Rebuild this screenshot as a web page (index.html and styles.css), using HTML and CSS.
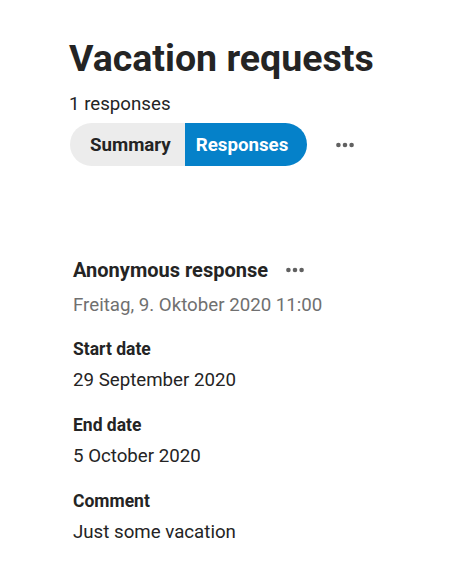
FILE: index.html
```html
<!DOCTYPE html>
<html lang="en">
<head>
<meta charset="utf-8">
<title>Vacation requests</title>
<link rel="stylesheet" href="styles.css">
</head>
<body>
<main class="page">
  <header class="head">
    <h1 class="title">Vacation requests</h1>
    <div class="count">1 responses</div>
    <div class="tabs-row">
      <div class="tabs">
        <button class="tab">Summary</button>
        <button class="tab active">Responses</button>
      </div>
      <button class="more" aria-label="More options">
        <svg width="18" height="6" viewBox="0 0 18 6"><circle cx="2.4" cy="3" r="2.3"/><circle cx="9" cy="3" r="2.3"/><circle cx="15.6" cy="3" r="2.3"/></svg>
      </button>
    </div>
  </header>
  <section class="response">
    <div class="resp-head">
      <h2 class="resp-title">Anonymous response</h2>
      <button class="more small" aria-label="More options">
        <svg width="18" height="6" viewBox="0 0 18 6"><circle cx="2.4" cy="3" r="2.3"/><circle cx="9" cy="3" r="2.3"/><circle cx="15.6" cy="3" r="2.3"/></svg>
      </button>
    </div>
    <div class="resp-date">Freitag, 9. Oktober 2020 11:00</div>
    <div class="field first">
      <div class="label">Start date</div>
      <div class="value">29 September 2020</div>
    </div>
    <div class="field">
      <div class="label">End date</div>
      <div class="value">5 October 2020</div>
    </div>
    <div class="field">
      <div class="label">Comment</div>
      <div class="value">Just some vacation</div>
    </div>
  </section>
</main>
</body>
</html>
```

FILE: styles.css
```css
* { box-sizing: border-box; }
html, body { margin: 0; padding: 0; background: #ffffff; }
body {
  font-family: Roboto, "Liberation Sans", Arial, sans-serif;
  color: #242424;
}
.page { padding: 36px 0 0 69px; }
.title {
  margin: 0;
  font-size: 37.5px;
  line-height: 44px;
  font-weight: 700;
  color: #242424;
}
.count {
  margin-top: 12px;
  font-size: 18.7px;
  line-height: 24px;
  color: #242424;
}
.tabs-row {
  margin-top: 7px;
  display: flex;
  align-items: center;
}
.tabs {
  display: flex;
  height: 43px;
  border-radius: 22px;
  overflow: hidden;
  margin-left: 1px;
}
.tab {
  border: 0;
  margin: 0;
  font-family: inherit;
  font-size: 18.7px;
  font-weight: 700;
  color: #242424;
  background: #ececec;
  padding: 0 14px 0 20px;
  height: 43px;
}
.tab.active {
  background: #0581c9;
  color: #ffffff;
  padding: 0 19px 0 11px;
}
.more {
  border: 0;
  background: transparent;
  padding: 0;
  margin-left: 29px;
  display: flex;
  fill: #616161;
}
.response {
  margin-top: 92px;
  padding-left: 4px;
}
.resp-head {
  display: flex;
  align-items: center;
  height: 24px;
}
.resp-title {
  margin: 0;
  font-size: 20px;
  line-height: 24px;
  font-weight: 700;
}
.more.small { margin-left: 18px; }
.resp-date {
  margin-top: 11px;
  font-size: 18.7px;
  line-height: 24px;
  color: #707070;
}
.field { margin-top: 22px; }
.field.first { margin-top: 21px; }
.label {
  font-size: 17.5px;
  line-height: 22px;
  font-weight: 700;
}
.value {
  margin-top: 8px;
  font-size: 18.7px;
  line-height: 24px;
}
```
